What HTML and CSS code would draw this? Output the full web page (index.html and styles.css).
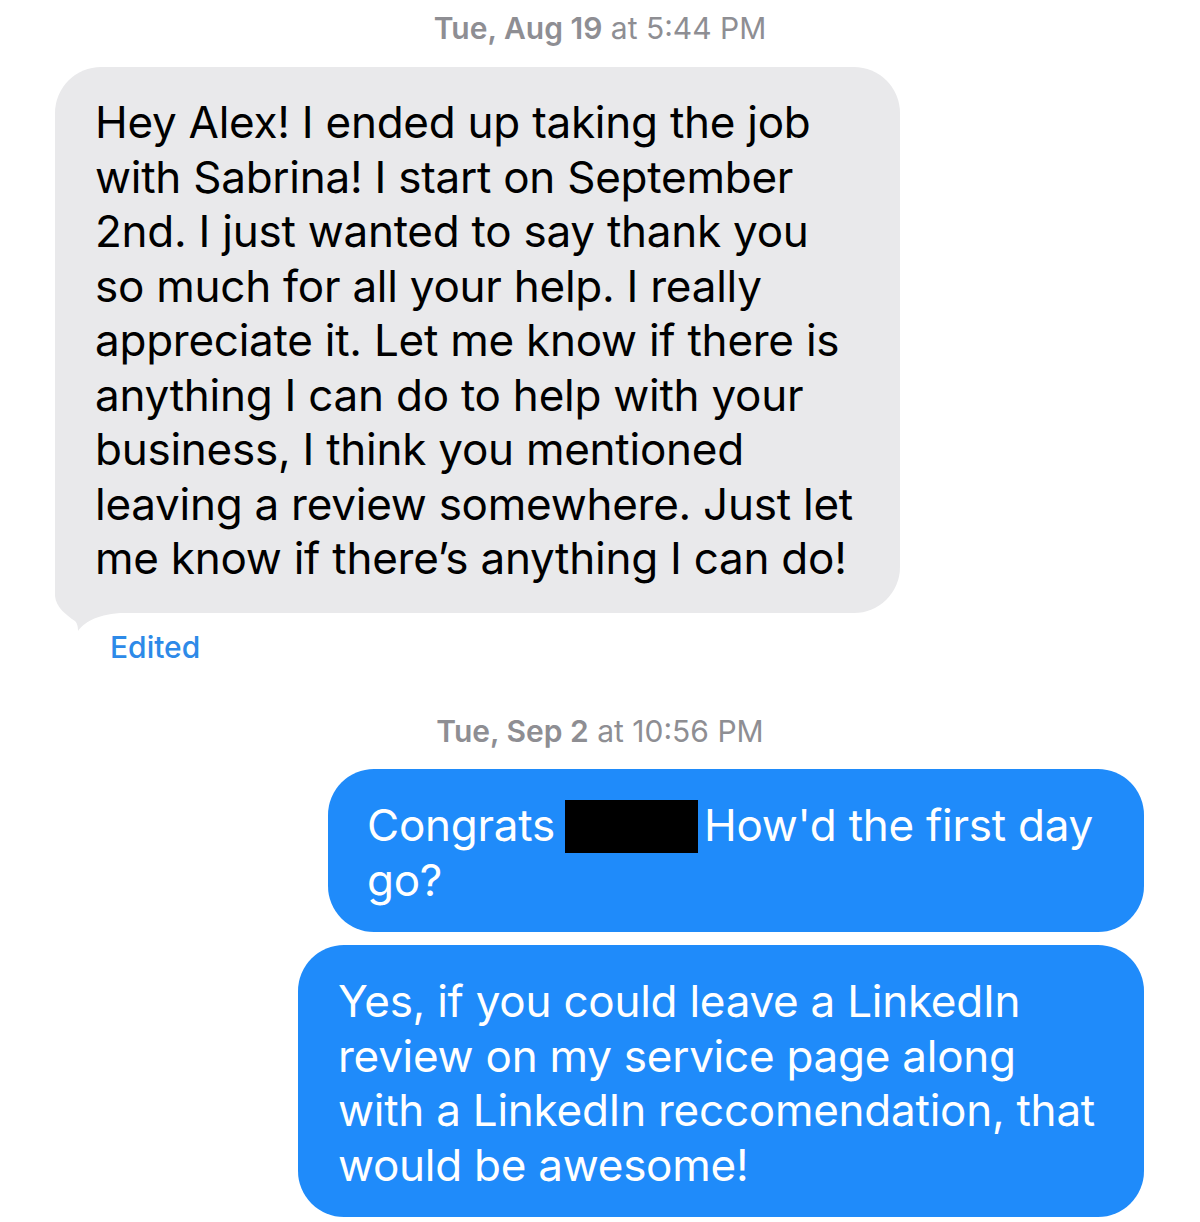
FILE: index.html
```html
<!DOCTYPE html>
<html lang="en">
<head>
    <meta charset="UTF-8">
    <meta name="viewport" content="width=device-width, initial-scale=1.0">
    <title>Messages</title>
    <link rel="stylesheet" href="styles.css">
</head>
<body>

<div class="thread">
    <div class="stamp stamp-first"><b>Tue, Aug 19</b> at 5:44 PM</div>

    <div class="bubble received">
        Hey Alex! I ended up taking the job with Sabrina! I start on September 2nd. I just wanted to say thank you so much for all your help. I really appreciate it. Let me know if there is anything I can do to help with your business, I think you mentioned leaving a review somewhere. Just let me know if there’s anything I can do!
        <svg class="tail" viewBox="0 0 70 72" width="70" height="72">
            <path d="M0,0 L0,35 C1,46 11,54 20,60 C23,63 23,68 23,70 C29,62 40,54 65,52 L65,0 Z" fill="#e9e9eb"/>
        </svg>
    </div>
    <div class="edited">Edited</div>

    <div class="stamp stamp-second"><b>Tue, Sep 2</b> at 10:56 PM</div>

    <div class="bubble sent first">
        Congrats<span class="redacted"></span>How'd the first day go?
    </div>
    <div class="bubble sent second">
        Yes, if you could leave a LinkedIn review on my service page along with a LinkedIn reccomendation, that would be awesome!
    </div>
</div>

</body>
</html>
```

FILE: styles.css
```css
body {
    margin: 0;
    background: #fff;
    font-family: Inter, "Noto Sans", sans-serif;
}
.thread {
    display: flex;
    flex-direction: column;
}
.stamp {
    text-align: center;
    font-size: 30px;
    line-height: 34px;
    color: #8e8e93;
}
.stamp b {
    font-weight: 600;
}
.stamp-first {
    padding-top: 11px;
}
.stamp-second {
    margin-top: 50px;
}
.bubble {
    position: relative;
    z-index: 0;
    box-sizing: border-box;
    font-size: 44px;
    line-height: 54.5px;
    letter-spacing: -0.25px;
    border-radius: 46px;
}
.received {
    margin: 22px 0 0 55px;
    width: 845px;
    padding: 28px 36px 27px 40px;
    background: #e9e9eb;
    color: #000;
}
.tail {
    position: absolute;
    z-index: -1;
    left: 0;
    bottom: -20px;
}
.edited {
    margin: 17px 0 0 110px;
    font-size: 30px;
    line-height: 34px;
    font-weight: 500;
    color: #2d8ae8;
}
.sent {
    align-self: flex-end;
    margin-right: 56px;
    background: #1f8bfa;
    color: #fff;
    padding: 29px 36px 25px 39px;
}
.sent.first {
    margin-top: 21px;
    width: 816px;
}
.sent.second {
    margin-top: 13px;
    width: 846px;
    padding-left: 40px;
}
.redacted {
    display: inline-block;
    width: 133px;
    height: 53px;
    margin: 0 6px 0 10px;
    background: #000;
    vertical-align: -12px;
}
```
